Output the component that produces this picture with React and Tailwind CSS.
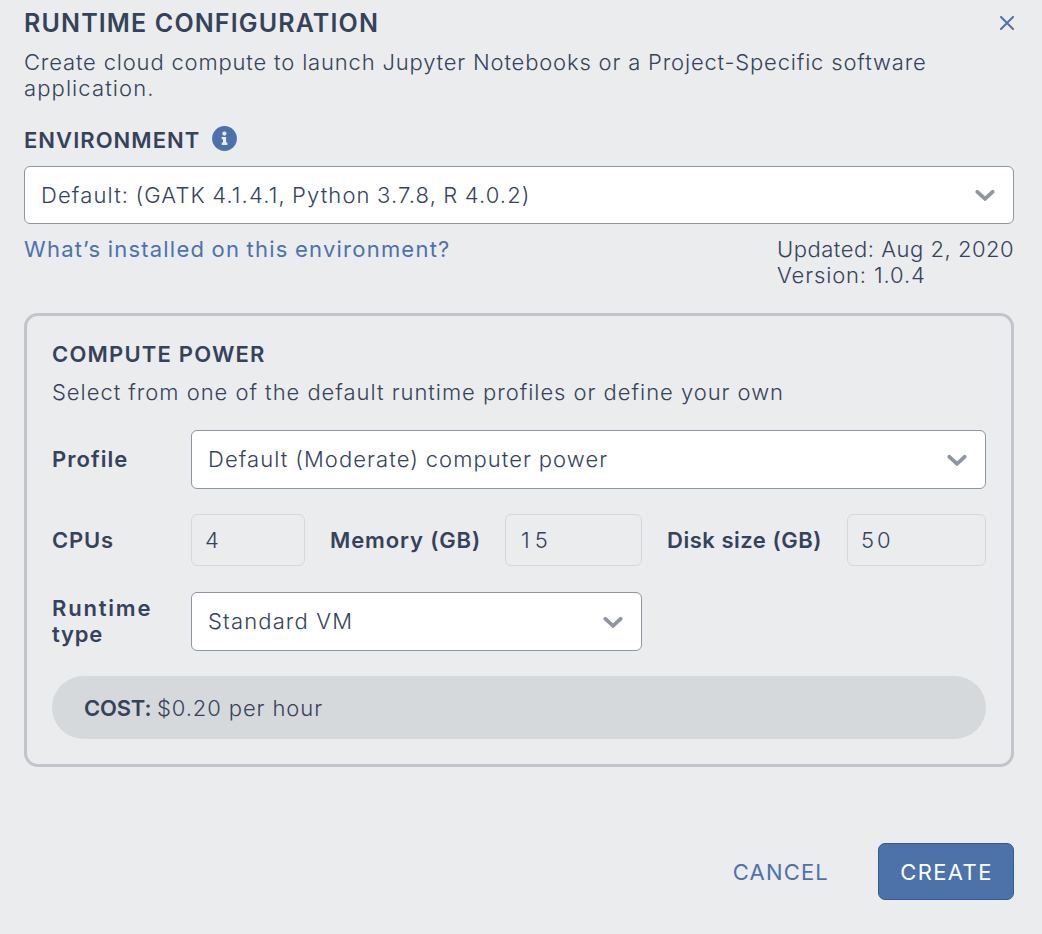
function ChevronDown() {
  return (
    <svg width="20" height="12" viewBox="0 0 20 12" fill="none" className="shrink-0">
      <path d="M2.4 2.8 10 9.8l7.6-7" stroke="#8f96a3" strokeWidth="3.8" strokeLinecap="round" />
    </svg>
  );
}

function InfoIcon() {
  return (
    <svg width="25" height="25" viewBox="0 0 25 25" className="shrink-0">
      <circle cx="12.5" cy="12.5" r="12.4" fill="#4d72aa" />
      <circle cx="12.4" cy="7.6" r="2.1" fill="#eaecee" />
      <path d="M9.7 11h4.4v5.6h1.3v2.3H9.7v-2.3H11v-3.3H9.7z" fill="#eaecee" />
    </svg>
  );
}

function Select({ className, children }) {
  return (
    <button
      type="button"
      className={`flex items-center justify-between rounded-[6px] border border-[#8f96a3] bg-white pl-4 pr-[18px] text-left ${className}`}
    >
      {children}
      <ChevronDown />
    </button>
  );
}

function NumberField({ label, value, className }) {
  return (
    <input
      readOnly
      aria-label={label}
      defaultValue={value}
      className={`h-[52px] rounded-[6px] border border-[#d6d9dc] bg-transparent outline-none ${className}`}
    />
  );
}

export default function App() {
  return (
    <main className="flex h-[934px] w-[1042px] flex-col bg-[#eaecee] pl-6 pr-7 font-['Inter',sans-serif] text-[22px] leading-[26px] font-light text-[#35435a]">
      <header className="flex h-12 items-start justify-between pt-[7px]">
        <h1 className="pt-px text-[25px] leading-[30px] font-semibold tracking-[1.15px] whitespace-nowrap">RUNTIME CONFIGURATION</h1>
        <button type="button" aria-label="Close" className="pt-[9px]">
          <svg width="14" height="14" viewBox="0 0 14 14" fill="none" className="block">
            <path d="M1 1l12 12M13 1 1 13" stroke="#4d72aa" strokeWidth="2" strokeLinecap="round" />
          </svg>
        </button>
      </header>

      <p className="mt-px h-[52px] whitespace-nowrap">
        <span className="tracking-[0.82px]">Create cloud compute to launch Jupyter Notebooks or a Project-Specific software</span>
        <br />
        <span className="tracking-[1.1px]">application.</span>
      </p>

      <div className="mt-[25px] flex h-[40px]">
        <h2 className="pt-px font-semibold tracking-[1.04px]">ENVIRONMENT</h2>
        <span className="ml-[12px]">
          <InfoIcon />
        </span>
      </div>
      <Select className="h-[58px] w-[990px]">
        <span className="tracking-[1.13px] [word-spacing:-1px]">Default: (GATK 4.1.4.1, Python 3.7.8, R 4.0.2)</span>
      </Select>

      <div className="mt-3 flex h-[77px] items-start justify-between">
        <a className="font-normal tracking-[1.22px] text-[#4d72aa] [word-spacing:-1px]">What’s installed on this environment?</a>
        <div className="w-[237px] whitespace-nowrap">
          <div className="tracking-[0.52px]">Updated: Aug 2, 2020</div>
          <div className="tracking-[0.86px]">Version: 1.0.4</div>
        </div>
      </div>

      <section className="h-[454px] w-[990px] rounded-[14px] border-[3px] border-[#c2c4cc] px-[25px] pt-[25px]">
        <h2 className="font-semibold tracking-[1.2px]">COMPUTE POWER</h2>
        <p className="mt-3 tracking-[0.96px]">Select from one of the default runtime profiles or define your own</p>

        <div className="mt-[25px] flex items-center">
          <div className="w-[139px] pb-0.5 font-semibold tracking-[1.05px]">Profile</div>
          <Select className="h-[59px] w-[795px]">
            <span className="pb-0.5 tracking-[1.07px] [word-spacing:-0.5px]">Default (Moderate) computer power</span>
          </Select>
        </div>

        <div className="mt-[25px] flex items-center whitespace-nowrap">
          <div className="w-[139px] font-semibold tracking-[0.8px]">CPUs</div>
          <NumberField label="CPUs" value="4" className="w-[114px] pl-[13px] tracking-[1px]" />
          <div className="w-[200px] pl-[25px] font-semibold tracking-[0.87px]">Memory (GB)</div>
          <NumberField label="Memory (GB)" value="15" className="w-[137px] pl-[15px] tracking-[5px]" />
          <div className="w-[205px] pl-[25px] font-semibold tracking-[0.52px]">Disk size (GB)</div>
          <NumberField label="Disk size (GB)" value="50" className="w-[139px] pl-[13px] tracking-[3px]" />
        </div>

        <div className="mt-[26px] flex items-center">
          <div className="w-[139px] pb-0.5 font-semibold">
            <span className="tracking-[1.8px]">Runtime</span>
            <br />
            <span className="tracking-[0.8px]">type</span>
          </div>
          <Select className="h-[59px] w-[451px]">
            <span className="pb-0.5 tracking-[1.15px]">Standard VM</span>
          </Select>
        </div>

        <div className="mt-[25px] flex h-[63px] items-center rounded-full bg-[#d5d9dc] pl-8">
          <strong className="w-[73px] font-semibold tracking-[-0.2px]">COST:</strong>
          <span className="tracking-[0.9px]">$0.20 per hour</span>
        </div>
      </section>

      <footer className="mt-[76px] flex items-center justify-end font-normal">
        <button type="button" className="mr-[49px] tracking-[1.2px] text-[#4d72aa]">CANCEL</button>
        <button type="button" className="h-[57px] w-[136px] rounded-[7px] border border-[#2e5c9c] bg-[#4d72aa] pl-px tracking-[1.4px] text-white">
          CREATE
        </button>
      </footer>
    </main>
  );
}
